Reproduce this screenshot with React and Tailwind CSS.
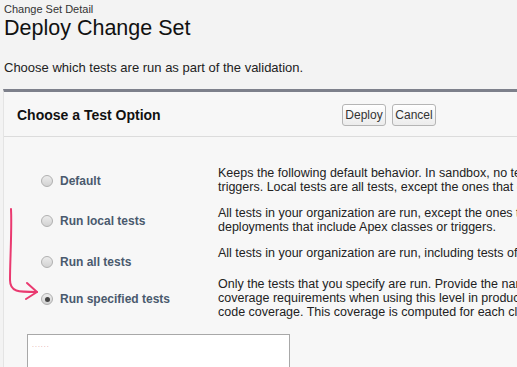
import React from 'react';

const OPTIONS = [
  {
    label: 'Default',
    lines: [
      'Keeps the following default behavior. In sandbox, no tests are run. In production, all local tests are run if your change sets contain Apex classes or',
      'triggers. Local tests are all tests, except the ones that originate from managed packages.',
    ],
    row: 'mt-[29px] h-[28px]',
  },
  {
    label: 'Run local tests',
    lines: [
      'All tests in your organization are run, except the ones that originate from installed managed packages. This test level is the default for production',
      'deployments that include Apex classes or triggers.',
    ],
    row: 'mt-3 h-[28px]',
  },
  {
    label: 'Run all tests',
    lines: ['All tests in your organization are run, including tests of managed packages.'],
    row: 'mt-3 h-[30px]',
  },
  {
    label: 'Run specified tests',
    lines: [
      'Only the tests that you specify are run. Provide the names of test classes in a comma-separated list. Code coverage requirements differ from the default',
      'coverage requirements when using this level in production. Each class and trigger in the deployment package must be covered by the executed tests',
      'code coverage. This coverage is computed for each class and trigger individually and is different than the overall coverage percentage.',
    ],
    row: 'mt-[1px] h-[42px]',
    checked: true,
  },
];

function Radio({ checked }) {
  return (
    <span className="w-[12px] h-[12px] rounded-full border border-[#b0b0b0] bg-gradient-to-b from-[#ececec] to-[#d2d2d2] flex items-center justify-center shrink-0">
      {checked && <span className="w-[5px] h-[5px] rounded-full bg-[#444]" />}
    </span>
  );
}

export default function App() {
  return (
    <div className="relative w-[517px] h-[367px] overflow-hidden bg-[#f3f3f3] text-[#222] font-['Liberation_Sans',Arial,sans-serif]">
      <div className="pl-[4px] pt-[3px]">
        <div className="text-[11px] leading-[13px] text-[#333]">Change Set Detail</div>
        <h1 className="text-[21.5px] leading-[24px] text-[#111]">Deploy Change Set</h1>
        <p className="mt-[21px] text-[13px] leading-[14px] text-[#222]">Choose which tests are run as part of the validation.</p>
      </div>

      <div className="ml-[3px] mt-[14px] w-[600px] border-t-[3px] border-t-[#7d808b] border-l border-l-[#e4e4e4] bg-[#f7f7f7] h-[300px]">
        <div className="h-[45px] pt-[2px] flex items-center border-b border-[#dcdcdc]">
          <h2 className="pl-[13px] w-[338px] shrink-0 text-[14px] font-bold text-[#111]">Choose a Test Option</h2>
          <div className="flex gap-[6px]">
            <button className="h-[22px] w-[44px] border border-[#b5b5b5] rounded-[3px] bg-gradient-to-b from-white to-[#ececec] text-[12px] text-[#333]">Deploy</button>
            <button className="h-[22px] w-[44px] border border-[#b5b5b5] rounded-[3px] bg-gradient-to-b from-white to-[#ececec] text-[12px] text-[#333]">Cancel</button>
          </div>
        </div>

        {OPTIONS.map((o) => (
          <div key={o.label} className={`flex ${o.row}`}>
            <div className="w-[214px] shrink-0 pl-[37px] pt-[2px] flex items-center gap-[7px] self-stretch">
              <Radio checked={o.checked} />
              <span className="text-[12px] font-bold text-[#4a5a6e] whitespace-nowrap">{o.label}</span>
            </div>
            <div className="text-[12.5px] leading-[14px] text-[#222] whitespace-nowrap">
              {o.lines.map((l, i) => (
                <div key={i}>{l}</div>
              ))}
            </div>
          </div>
        ))}

        <div className="mt-[15px] ml-[23px] w-[263px] h-[40px] bg-white border border-[#a8a8a8] pl-[4px] pt-[6px]">
          <div className="text-[7px] leading-[8px] text-[#d99] tracking-[1px]">......</div>
        </div>
      </div>

      <svg className="absolute left-0 top-0 pointer-events-none" width="60" height="320" viewBox="0 0 60 320">
        <path d="M11 209 C12 230 10 260 10 280 C10 292 18 292 37 292" fill="none" stroke="#ea3a70" strokeWidth="2" strokeLinecap="round" />
        <path d="M27 283 L37 292 L26 299" fill="none" stroke="#ea3a70" strokeWidth="2" strokeLinecap="round" strokeLinejoin="round" />
      </svg>
    </div>
  );
}
